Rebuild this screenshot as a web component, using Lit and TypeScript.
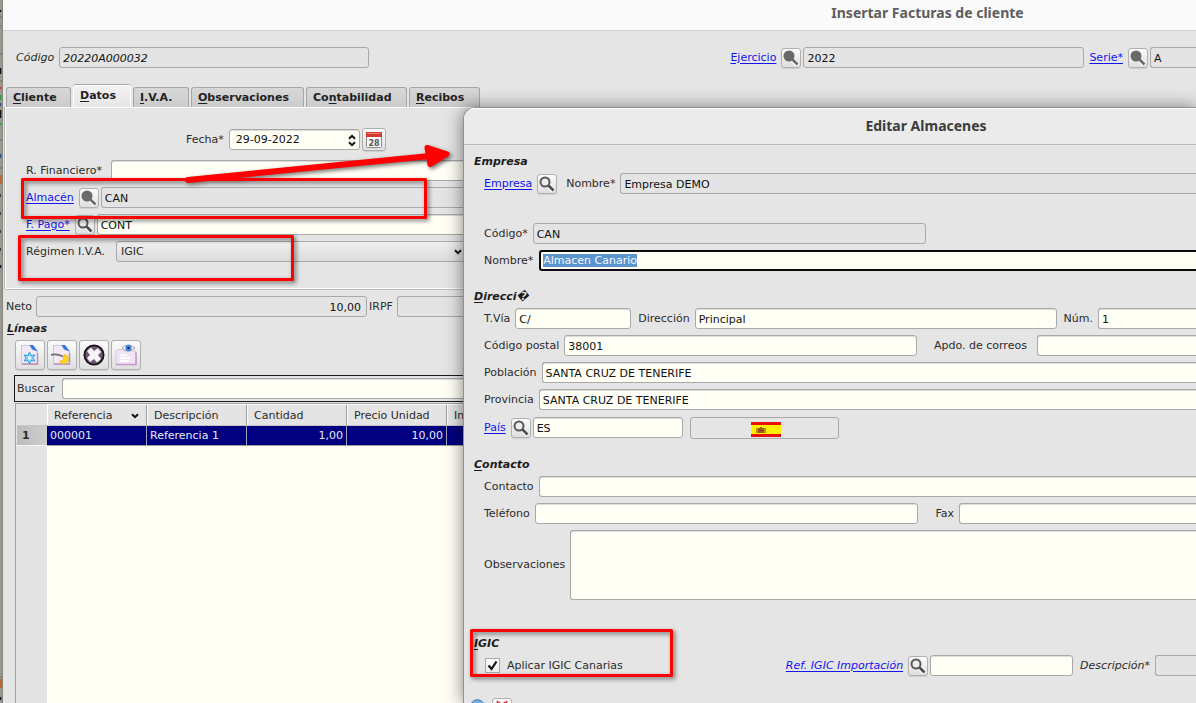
import { LitElement, html, css, svg } from "lit";
import { customElement } from "lit/decorators.js";

const lens = (disabled = false) => svg`
  <svg class="lens" viewBox="0 0 18 18" aria-hidden="true">
    <path d="M10.5 10.5 L15.5 16" stroke="#ffffff" stroke-width="4.5" fill="none"/>
    <path d="M10 10 L15.5 15.5" stroke="${disabled ? "#6a6a6a" : "#4c4c4c"}" stroke-width="2.6" fill="none"/>
    <circle cx="7" cy="7" r="4.5" fill="${disabled ? "#6a6a6a" : "#ececec"}" stroke="${disabled ? "#6a6a6a" : "#585858"}" stroke-width="2"/>
  </svg>`;

const searchButton = (label: string, disabled = false) =>
  html`<button class="search" type="button" aria-label=${label} ?disabled=${disabled}>${lens(disabled)}</button>`;

const chevron = svg`<svg class="chevron" viewBox="0 0 8 6" aria-hidden="true"><path d="M1 1.2 L4 4.2 L7 1.2" fill="none" stroke="#111" stroke-width="2"/></svg>`;

const page = svg`
  <path d="M2.5 1.5 H12 L18.500 8 V20.500 H2.500 Z" fill="#f3e9f5" stroke="#cfc5da"/>
  <path d="M3 20 H18.500 V9" fill="none" stroke="#b58fb4" stroke-width="1.500"/>
  <path d="M10.500 1 H14 L19 7.500 L13 5.500 Z" fill="#3b74dc"/>`;

@customElement("app-root")
export class AppRoot extends LitElement {
  static styles = css`
    :host {
      display: block;
      position: relative;
      height: 100vh;
      overflow: hidden;
      font: 11px/14px "DejaVu Sans", sans-serif;
      color: #2b2b2b;
      background: #e5e5e5;
    }
    * { box-sizing: border-box; }
    input, select, button, textarea { font: inherit; color: #111; margin: 0; }
    a { color: #1414f0; text-decoration: underline; text-underline-offset: 2px; margin-right: 5px; white-space: nowrap; }
    label { margin-right: 5px; white-space: nowrap; }
    u { text-underline-offset: 2px; }
    svg { display: block; }

    .desktop { display: flex; height: 100%; }
    .strip { flex: none; width: 3px; height: 100%; background: #999990; border-right: 1px solid #85857f; }
    .window { flex: 1; min-width: 0; display: flex; flex-direction: column; background: #e5e5e5; border-top-left-radius: 3px; }
    .title {
      margin: 0;
      height: 31px;
      display: flex;
      align-items: center;
      justify-content: center;
      padding: 0 0 4px 656px;
      font: bold 14px/20px "Noto Sans", sans-serif;
      color: #5e5e5e;
      background: #fafafa;
      border-bottom: 1px solid #cfcfcf;
      white-space: nowrap;
    }
    .row { display: flex; align-items: center; min-height: 21px; }
    .head { padding: 16px 0 0 13px; }
    .space { flex: 1; }
    .gap { margin-left: 7px; }
    .wide-gap { margin-left: 17px; }
    .italic { font-style: italic; }
    .pair { margin-left: 5px; }
    .l80 { width: 80px; }
    .l85 { width: 85px; }
    .l98 { width: 98px; }

    .field, .box {
      height: 21px;
      min-width: 0;
      border: 1px solid #a9a9a9;
      border-radius: 3px;
      background: #fffff6;
      padding: 1px 3px 0;
      outline: none;
      box-shadow: inset 0 1px 0 #dcdcd8;
    }
    .off { background: #e4e4e4; box-shadow: none; }
    .grow { flex: 1; }
    .cut { border-right: 0; border-top-right-radius: 0; border-bottom-right-radius: 0; }
    .right { text-align: right; padding-right: 5px; }
    .w41 { width: 41px; }
    .w46 { width: 46px; }
    .w98 { width: 98px; }
    .w116 { width: 116px; }
    .w143 { width: 143px; }
    .w150 { width: 150px; }
    .w159 { width: 159px; }
    .w237 { width: 237px; }
    .w281 { width: 281px; }
    .w310 { width: 310px; }
    .w331 { width: 331px; }
    .w393 { width: 393px; }

    button { font: inherit; }
    .search, .calendar, .tool {
      flex: none;
      padding: 0;
      display: flex;
      align-items: center;
      justify-content: center;
      border: 1px solid #b0b0b0;
      border-radius: 3px;
      background: linear-gradient(#fbfbfb, #dfdfdf);
      box-shadow: 0 1px 1px #cfcfcf;
    }
    .search { width: 20px; height: 20px; margin-right: 2px; }
    .lens { width: 18px; height: 18px; }
    .calendar { width: 24px; height: 23px; margin-left: 2px; }
    .tool { width: 30px; height: 30px; }
    .chevron { width: 8px; height: 6px; flex: none; pointer-events: none; }

    .tabs { display: flex; align-items: flex-end; gap: 2px; margin-top: 17px; padding-left: 3px; height: 22px; }
    .tab {
      height: 20px;
      padding: 0 6px;
      text-align: left;
      font-weight: bold;
      color: #222;
      border: 1px solid #a6a6a6;
      border-bottom: 0;
      border-radius: 3px 3px 0 0;
      background: linear-gradient(#d8d8d8, #cbcbcb);
      white-space: nowrap;
    }
    .tab.active { height: 22px; background: linear-gradient(#f2f2f2, #e6e6e6); border-color: #fff; box-shadow: 0 -1px 0 #a6a6a6; padding-bottom: 2px; }
    .tab.t1 { width: 65px; }
    .tab.t2 { width: 58px; }
    .tab.t3 { width: 56px; }
    .tab.t4 { width: 113px; }
    .tab.t5 { width: 101px; }
    .tab.t6 { width: 71px; }
    .panel {
      margin-left: 2px;
      padding: 20px 0 26px 20px;
      border: solid #fff;
      border-width: 1px 0 1px 1px;
      box-shadow: -1px 0 0 #b4b4b4, 0 1px 0 #bcbcbc;
      display: flex;
      flex-direction: column;
      gap: 6px;
    }
    .date-row { padding-left: 160px; margin-bottom: 3px; }
    .box { display: flex; align-items: center; }
    .box .bare { flex: 1; min-width: 0; border: 0; background: none; padding: 0 3px; outline: none; appearance: none; }
    .date { width: 131px; }
    .spin { display: flex; flex-direction: column; gap: 1px; }
    .up { transform: rotate(180deg); }
    .combo { width: 354px; background: linear-gradient(#f0f0f0, #dcdcdc); padding: 0 7px 0 1px; box-shadow: none; }
    .combo .bare { color: #2b2b2b; }

    .totals { padding: 7px 0 0 3px; min-height: 28px; }
    .totals label { margin-right: 4px; }
    .irpf { margin-left: 2px; }
    h2 { margin: 0; font: italic bold 11px/16px "DejaVu Sans", sans-serif; color: #1c1c1c; }
    .lines-title { padding: 4px 0 3px 4px; }
    .tools { display: flex; gap: 2px; padding-left: 12px; }
    .tool-icon { width: 22px; height: 22px; }
    .find { display: flex; align-items: center; height: 27px; margin: 5px 0 1px 11px; padding-left: 2px; border: 1px solid #1a1a1a; border-right: 0; }
    .find label { margin-right: 7px; }
    .grid {
      flex: 1;
      margin-left: 12px;
      border: solid #a3a3a3;
      border-width: 1px 0 0 1px;
      padding: 1px 0 0 1px;
      background: linear-gradient(90deg, #e4e4e4 31px, #fffff6 31px);
    }
    table { width: 100%; border-collapse: separate; border-spacing: 0; table-layout: fixed; }
    .c-num { width: 30px; }
    .c-data { width: 100px; }
    th, td { padding: 0 3px; white-space: nowrap; overflow: hidden; font-weight: normal; text-align: left; }
    thead th { height: 21px; background: #e4e4e4; border-right: 1px solid #9d9d9d; border-bottom: 1px solid #c4c4c4; box-shadow: inset 1px 0 0 #fff; padding: 2px 7px 0; }
    thead th:first-child { border-right: 0; box-shadow: none; }
    .sort { display: flex; align-items: center; justify-content: space-between; }
    tbody td { height: 20px; background: #000080; color: #e9e9f4; border-right: 1px solid #a0a0b8; border-bottom: 1px solid #a0a0a0; padding-top: 1px; }
    tbody th { height: 20px; background: linear-gradient(90deg, #bcbcbc, #cecece); padding: 1px 0 0 5px; font-weight: bold; border-bottom: 1px solid #f5f5f5; }
    td.num { text-align: right; }

    .dialog {
      position: absolute;
      left: 463px;
      top: 107px;
      right: 0;
      bottom: 0;
      background: #e5e5e5;
      border: solid #909090;
      border-width: 1px 0 0 1px;
      border-radius: 12px 0 0 0;
      box-shadow: 0 1px 18px rgba(0, 0, 0, 0.5);
      overflow: hidden;
    }
    .dialog .title { height: 37px; padding: 0 0 0 192px; background: #ebebeb; color: #3c3c3c; border-color: #bababa; box-shadow: inset 0 1px 0 #fff; }
    .form { padding: 9px 0 0 10px; display: flex; flex-direction: column; gap: 18px; }
    .group { display: flex; flex-direction: column; gap: 6px; padding-left: 10px; }
    .group h2 { margin: 0 0 -3px -10px; }
    .ident { margin-top: 11px; }
    .igic { margin-top: 18px; }
    .tall { min-height: 23px; }
    .focus { border: 2px solid #0a0a0a; border-right: 0; padding: 0 2px; box-shadow: none; margin-left: 1px; }
    .focus::selection { background: #5c94cd; color: #f4f8ff; }
    .area { height: 70px; resize: none; }
    .flag-box { width: 149px; height: 22px; border: 1px solid #a9a9a9; border-radius: 3px; display: flex; align-items: center; justify-content: center; padding: 3px 0 0 3px; margin-left: 7px; }
    .flag { width: 30px; height: 15px; }
    .check { appearance: none; width: 15px; height: 15px; border: 1px solid #a9a9a9; background: linear-gradient(#fff, #ececec); margin: 0; }
    .check-wrap { position: relative; margin: 0 7px 0 1px; display: flex; }
    .tick { position: absolute; left: 2px; top: 2px; width: 11px; height: 11px; pointer-events: none; }
    .foot { display: flex; gap: 7px; margin: 4px 0 0 -4px; }
    .foot .search { margin: 0; }
    .help { width: 15px; height: 15px; margin-top: 1px; }
    .marks { position: absolute; left: 0; top: 0; width: 700px; height: 703px; pointer-events: none; filter: drop-shadow(2px 2px 2px rgba(0, 0, 0, 0.55)); }
  `;

  firstUpdated() {
    const name = this.renderRoot.querySelector<HTMLInputElement>("#alm-nombre");
    name?.focus({ preventScroll: true });
    name?.select();
  }

  private invoice() {
    return html`
      <main class="window">
        <h1 class="title">Insertar Facturas de cliente</h1>
        <div class="row head">
          <label class="italic" for="codigo">Código</label>
          <input id="codigo" class="field off italic w310" value="20220A000032" readonly />
          <span class="space"></span>
          <a href="#ejercicio">Ejercicio</a>${searchButton("Buscar ejercicio", true)}
          <input class="field off w281" aria-label="Ejercicio" value="2022" readonly />
          <span class="pair"></span>
          <a href="#serie">Serie*</a>${searchButton("Buscar serie", true)}
          <input class="field off cut w46" aria-label="Serie" value="A" readonly />
        </div>
        <nav class="tabs" role="tablist">
          <button class="tab t1" role="tab"><u>C</u>liente</button>
          <button class="tab active t2" role="tab" aria-selected="true"><u>D</u>atos</button>
          <button class="tab t3" role="tab"><u>I</u>.V.A.</button>
          <button class="tab t4" role="tab"><u>O</u>bservaciones</button>
          <button class="tab t5" role="tab">Co<u>n</u>tabilidad</button>
          <button class="tab t6" role="tab"><u>R</u>ecibos</button>
        </nav>
        <section class="panel">
          <div class="row date-row">
            <label for="fecha">Fecha*</label>
            <span class="box date">
              <input id="fecha" class="bare" value="29-09-2022" />
              <span class="spin">
                <svg class="chevron up" viewBox="0 0 8 6"><path d="M1 1.200 L4 4.200 L7 1.200" fill="none" stroke="#111" stroke-width="2"/></svg>
                ${chevron}
              </span>
            </span>
            <button class="calendar" type="button" aria-label="Calendario">
              <svg width="18" height="18" viewBox="0 0 18 18">
                <rect x="1.500" y="1.500" width="15" height="15" rx="1" fill="#f7f7f7" stroke="#8c8c8c"/>
                <path d="M1 1 H17 V6 H1 Z" fill="#d4392f"/>
                <path d="M2 2.500 H16" stroke="#ee7d74"/>
                <text x="9" y="14.500" text-anchor="middle" font-family="DejaVu Sans" font-weight="bold" font-size="8" fill="#555">28</text>
              </svg>
            </button>
          </div>
          <div class="row">
            <label class="l80" for="rfin">R. Financiero*</label>
            <input id="rfin" class="field grow cut" />
          </div>
          <div class="row">
            <a href="#almacen">Almacén</a>${searchButton("Buscar almacén", true)}
            <input class="field off grow cut" aria-label="Almacén" value="CAN" readonly />
          </div>
          <div class="row">
            <a href="#pago">F. Pago*</a>${searchButton("Buscar forma de pago")}
            <input class="field grow cut" aria-label="Forma de pago" value="CONT" />
          </div>
          <div class="row">
            <label class="l85" for="regimen">Régimen I.V.A.</label>
            <span class="box combo">
              <select id="regimen" class="bare"><option>IGIC</option></select>${chevron}
            </span>
          </div>
        </section>
        <div class="row totals">
          <label for="neto">Neto</label>
          <input id="neto" class="field off right w331" value="10,00" readonly />
          <label class="irpf" for="irpf">IRPF</label>
          <input id="irpf" class="field off grow cut" readonly />
        </div>
        <h2 class="lines-title"><u>L</u>íneas</h2>
        <div class="tools">
          <button class="tool" type="button" aria-label="Nueva línea">
            <svg class="tool-icon" viewBox="0 0 22 22">${page}
              <path d="M10.500 8 L12 11.500 L16 11 L13.800 14 L16 17 L12 16.500 L10.500 20 L9 16.500 L5 17 L7.200 14 L5 11 L9 11.500 Z" fill="#8fd6f7" stroke="#2e9be0"/>
              <circle cx="10.500" cy="14" r="1.700" fill="#e6f8ff"/>
            </svg>
          </button>
          <button class="tool" type="button" aria-label="Editar línea">
            <svg class="tool-icon" viewBox="0 0 22 22">${page}
              <path d="M0 11 C4 9.500 8 10.500 12 12.500" fill="none" stroke="#6f6c72" stroke-width="1.700"/>
              <path d="M13.500 10.500 A4.700 4.700 0 1 1 8.500 17 Q13 17.500 12.500 13 Z" fill="#ffd21c" stroke="#e8b414" stroke-width=".6"/>
            </svg>
          </button>
          <button class="tool" type="button" aria-label="Borrar línea">
            <svg class="tool-icon" viewBox="0 0 22 22">
              <circle cx="11" cy="11" r="9.600" fill="#6b596f" stroke="#17121a" stroke-width="1.800"/>
              <path d="M8 3.500 L11 7 L15 4 L18 8 L15 11 L18 15 L14 18.500 L11 15 L7 18 L4 14 L7 11 L4 7 Z" fill="#f8f4fa"/>
            </svg>
          </button>
          <button class="tool" type="button" aria-label="Ver línea">
            <svg class="tool-icon" viewBox="0 0 22 22">
              <path d="M1 7 L3 5.500 H8 L10 7 H21 V20.500 H1 Z" fill="#f1e4f4" stroke="#d9c6e0"/>
              <path d="M1 20.500 H21 V8" fill="none" stroke="#c29bc8" stroke-width="1.500"/>
              <path d="M5 11 H12 M5 14 H15 M5 17 H14" stroke="#fff" stroke-width="1.500"/>
              <path d="M7 4 Q13 -2 20 4 Q13 10 7 4 Z" fill="#fff" stroke="#a9a0ad"/>
              <circle cx="13.500" cy="4" r="3.200" fill="#3c8ee6"/><circle cx="13.500" cy="4" r="1.200" fill="#123"/>
            </svg>
          </button>
        </div>
        <div class="find">
          <label for="buscar">Buscar</label>
          <input id="buscar" class="field grow cut" />
        </div>
        <div class="grid">
          <table>
            <colgroup>
              <col class="c-num" /><col class="c-data" /><col class="c-data" /><col class="c-data" /><col class="c-data" /><col />
            </colgroup>
            <thead>
              <tr>
                <th></th>
                <th><span class="sort">Referencia ${chevron}</span></th>
                <th>Descripción</th><th>Cantidad</th><th>Precio Unidad</th><th>Importe</th>
              </tr>
            </thead>
            <tbody>
              <tr><th>1</th><td>000001</td><td>Referencia 1</td><td class="num">1,00</td><td class="num">10,00</td><td></td></tr>
            </tbody>
          </table>
        </div>
      </main>`;
  }

  private warehouse() {
    return html`
      <section class="dialog" role="dialog" aria-labelledby="dlg-title">
        <h1 id="dlg-title" class="title">Editar Almacenes</h1>
        <form class="form">
          <div class="group">
            <h2>Empresa</h2>
            <div class="row">
              <a href="#empresa">Empresa</a>${searchButton("Buscar empresa")}
              <label class="gap" for="emp-nombre">Nombre*</label>
              <input id="emp-nombre" class="field off grow cut" value="Empresa DEMO" readonly />
            </div>
          </div>
          <div class="group ident">
            <div class="row">
              <label for="alm-codigo">Código*</label>
              <input id="alm-codigo" class="field off w393" value="CAN" readonly />
            </div>
            <div class="row">
              <label for="alm-nombre">Nombre*</label>
              <input id="alm-nombre" class="field grow cut focus" value="Almacen Canario" />
            </div>
          </div>
          <div class="group">
            <h2><u>D</u>irecci\uFFFD</h2>
            <div class="row">
              <label for="via">T.Vía</label><input id="via" class="field w116" value="C/" />
              <label class="gap" for="dir">Dirección</label><input id="dir" class="field grow" value="Principal" />
              <label class="gap" for="num">Núm.</label><input id="num" class="field cut w98" value="1" />
            </div>
            <div class="row">
              <label for="cp">Código postal</label><input id="cp" class="field grow" value="38001" />
              <label class="wide-gap l98" for="apdo">Apdo. de correos</label><input id="apdo" class="field cut w159" />
            </div>
            <div class="row">
              <label for="pob">Población</label><input id="pob" class="field grow cut" value="SANTA CRUZ DE TENERIFE" />
            </div>
            <div class="row">
              <label for="prov">Provincia</label><input id="prov" class="field grow cut" value="SANTA CRUZ DE TENERIFE" />
            </div>
            <div class="row tall">
              <a href="#pais">País</a>${searchButton("Buscar país")}
              <input class="field w150" aria-label="País" value="ES" />
              <span class="flag-box">
                <svg class="flag" viewBox="0 0 30 15" role="img" aria-label="España">
                  <rect width="30" height="15" fill="#e8110f"/><rect y="3" width="30" height="9" fill="#ffee00"/>
                  <path d="M7 6 H9 V5 H11 V6 H13 V11 H7 Z" fill="#a8561c"/><path d="M6 6 V11 M14 6 V11 M8 8.500 H12" stroke="#7c3a12"/>
                </svg>
              </span>
            </div>
          </div>
          <div class="group">
            <h2><u>C</u>ontacto</h2>
            <div class="row">
              <label for="contacto">Contacto</label><input id="contacto" class="field grow cut" />
            </div>
            <div class="row">
              <label for="tel">Teléfono</label><input id="tel" class="field grow" />
              <label class="wide-gap" for="fax">Fax</label><input id="fax" class="field cut w237" />
            </div>
            <div class="row">
              <label for="obs">Observaciones</label><textarea id="obs" class="field grow cut area"></textarea>
            </div>
          </div>
          <div class="group igic">
            <h2><u>I</u>GIC</h2>
            <div class="row">
              <span class="check-wrap">
                <input id="igic" class="check" type="checkbox" checked />
                <svg class="tick" viewBox="0 0 11 11"><path d="M1.500 5.500 L4.500 9 L9.500 1.500" fill="none" stroke="#111" stroke-width="2.200"/></svg>
              </span>
              <label for="igic">Aplicar IGIC Canarias</label>
              <span class="space"></span>
              <a class="italic" href="#ref">Ref. IGIC Importación</a>${searchButton("Buscar referencia")}
              <input class="field w143" aria-label="Ref. IGIC Importación" />
              <label class="gap italic" for="desc">Descripción*</label>
              <input id="desc" class="field off cut w41" readonly />
            </div>
          </div>
          <div class="foot">
            <svg class="help" viewBox="0 0 15 15"><circle cx="7.500" cy="7.500" r="6.800" fill="#74aee6" stroke="#3c78b8"/></svg>
            <button class="search" type="button" aria-label="Cancelar">
              <svg class="lens" viewBox="0 0 18 18"><path d="M4 2 L9 5 L14 2 L13 9 L14 16 L9 13 L4 16 L5 9 Z" fill="#ef6a62" stroke="#c9302a"/></svg>
            </button>
          </div>
        </form>
      </section>`;
  }

  render() {
    return html`
      <div class="desktop">
        <svg class="strip" viewBox="0 0 3 703" preserveAspectRatio="none" aria-hidden="true">
          <path d="M0 10h2v2h-2z M0 68h2v6h-2z M0 110h2v8h-2z M0 194h1v3h-1z M0 212h1v3h-1z M0 230h1v3h-1z M0 248h1v3h-1z M0 265h2v3h-2z M0 697h2v3h-2z" fill="#151515"/>
          <path d="M0 17h3 M0 26h3 M0 54h3 M0 81h3 M0 140h3 M0 168h3 M0 677h3" stroke="#66665f"/>
          <path d="M0 87h2v2h-2z" fill="#b5391d"/>
          <path d="M0 95h2v5h-2z M0 123h2v2h-2z" fill="#2d9a36"/>
          <path d="M0 103h2v3h-2z M0 154h2v4h-2z" fill="#2e4f8e"/>
          <path d="M0 175h3v9h-3z M0 679h3v9h-3z" fill="#c0692a"/>
        </svg>
        ${this.invoice()}
      </div>
      ${this.warehouse()}
      <svg class="marks" viewBox="0 0 700 703" aria-hidden="true">
        <g fill="none" stroke="#fe0000" stroke-width="3" stroke-linejoin="round">
          <rect x="22.500" y="179.500" width="403" height="38"/>
          <rect x="19.500" y="236.500" width="273" height="43"/>
          <rect x="471.500" y="630.500" width="200" height="45"/>
          <path d="M188 180 L430 156" stroke-width="6" stroke-linecap="round"/>
          <path d="M427 147.500 L447 154 L430 164.500 Z" fill="#fe0000" stroke-width="5"/>
        </g>
      </svg>`;
  }
}
